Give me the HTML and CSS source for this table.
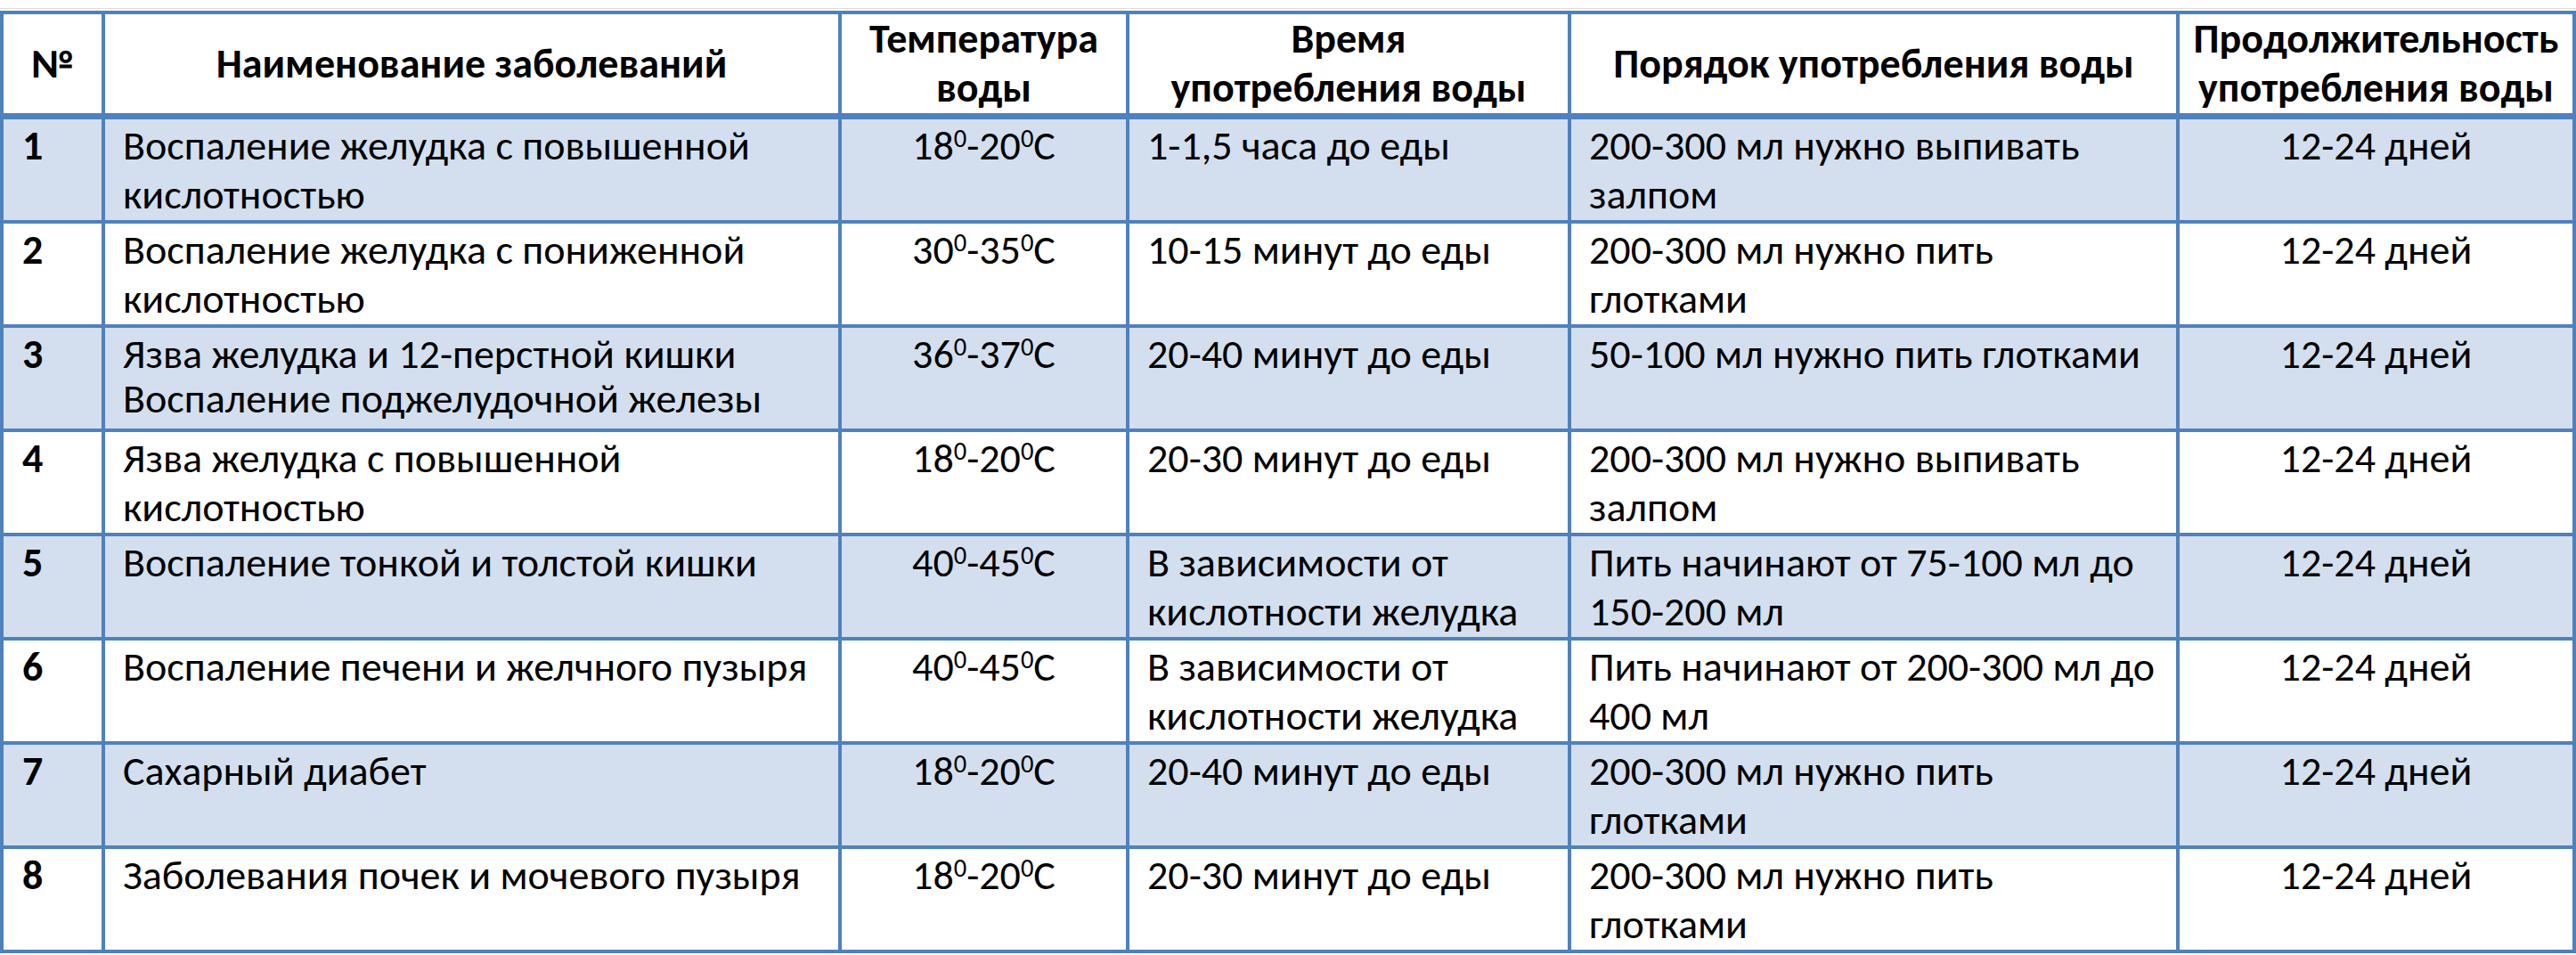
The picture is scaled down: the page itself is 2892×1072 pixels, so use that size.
FILE: index.html
```html
<!DOCTYPE html>
<html lang="ru">
<head>
<meta charset="utf-8">
<title>Таблица</title>
<link rel="stylesheet" href="styles.css">
</head>
<body>
<div class="page">
<table class="grid">
<colgroup>
<col class="c-num"><col class="c-name"><col class="c-temp"><col class="c-time"><col class="c-order"><col class="c-dur">
</colgroup>
<thead>
<tr class="head">
<th>№</th>
<th>Наименование заболеваний</th>
<th>Температура<br>воды</th>
<th>Время<br>употребления воды</th>
<th>Порядок употребления воды</th>
<th>Продолжительность<br>употребления воды</th>
</tr>
</thead>
<tbody>
<tr class="shade">
<td class="num">1</td>
<td>Воспаление желудка с повышенной<br>кислотностью</td>
<td class="ctr">18<sup>0</sup>-20<sup>0</sup>C</td>
<td>1-1,5 часа до еды</td>
<td>200-300 мл нужно выпивать<br>залпом</td>
<td class="ctr">12-24 дней</td>
</tr>
<tr>
<td class="num">2</td>
<td>Воспаление желудка с пониженной<br>кислотностью</td>
<td class="ctr">30<sup>0</sup>-35<sup>0</sup>C</td>
<td>10-15 минут до еды</td>
<td>200-300 мл нужно пить<br>глотками</td>
<td class="ctr">12-24 дней</td>
</tr>
<tr class="shade tight">
<td class="num">3</td>
<td>Язва желудка и 12-перстной кишки<br>Воспаление поджелудочной железы</td>
<td class="ctr">36<sup>0</sup>-37<sup>0</sup>C</td>
<td>20-40 минут до еды</td>
<td>50-100 мл нужно пить глотками</td>
<td class="ctr">12-24 дней</td>
</tr>
<tr>
<td class="num">4</td>
<td>Язва желудка с повышенной<br>кислотностью</td>
<td class="ctr">18<sup>0</sup>-20<sup>0</sup>C</td>
<td>20-30 минут до еды</td>
<td>200-300 мл нужно выпивать<br>залпом</td>
<td class="ctr">12-24 дней</td>
</tr>
<tr class="shade">
<td class="num">5</td>
<td>Воспаление тонкой и толстой кишки</td>
<td class="ctr">40<sup>0</sup>-45<sup>0</sup>C</td>
<td>В зависимости от<br>кислотности желудка</td>
<td>Пить начинают от 75-100 мл до<br>150-200 мл</td>
<td class="ctr">12-24 дней</td>
</tr>
<tr>
<td class="num">6</td>
<td>Воспаление печени и желчного пузыря</td>
<td class="ctr">40<sup>0</sup>-45<sup>0</sup>C</td>
<td>В зависимости от<br>кислотности желудка</td>
<td>Пить начинают от 200-300 мл до<br>400 мл</td>
<td class="ctr">12-24 дней</td>
</tr>
<tr class="shade">
<td class="num">7</td>
<td>Сахарный диабет</td>
<td class="ctr">18<sup>0</sup>-20<sup>0</sup>C</td>
<td>20-40 минут до еды</td>
<td>200-300 мл нужно пить<br>глотками</td>
<td class="ctr">12-24 дней</td>
</tr>
<tr>
<td class="num">8</td>
<td>Заболевания почек и мочевого пузыря</td>
<td class="ctr">18<sup>0</sup>-20<sup>0</sup>C</td>
<td>20-30 минут до еды</td>
<td>200-300 мл нужно пить<br>глотками</td>
<td class="ctr">12-24 дней</td>
</tr>
</tbody>
</table>
</div>
</body>
</html>
```

FILE: styles.css
```css
html, body {
  margin: 0;
  padding: 0;
  background: #ffffff;
}
.page {
  margin-top: 9px;
  border-top: 1px solid #dcdcdc;
  padding-top: 2px;
  width: 2892px;
}
.grid {
  border-collapse: collapse;
  table-layout: fixed;
  width: 2888px;
  font-family: "Carlito", "Roboto", "Liberation Sans", sans-serif;
  font-size: 46px;
  color: #000000;
}
.c-num { width: 114px; }
.c-name { width: 827px; }
.c-temp { width: 323px; }
.c-time { width: 496px; }
.c-order { width: 683px; }
.c-dur { width: 445px; }

.grid th, .grid td {
  border: 4px solid #4f81bd;
  white-space: nowrap;
}
.head th {
  padding: 0 6px 1px 6px;
  font-weight: bold;
  text-align: center;
  vertical-align: middle;
  line-height: 55px;
  border-bottom-width: 7px;
  background: #ffffff;
}
.grid td {
  padding: 2px 8px 1px 20px;
  vertical-align: top;
  text-align: left;
  line-height: 55px;
  background: #ffffff;
}
.grid tr.shade td {
  background: #d3dfee;
}
.grid tr.tight td {
  line-height: 50px;
  padding-top: 4px;
  padding-bottom: 9px;
}
.grid td.num {
  font-weight: bold;
  padding-left: 21px;
}
.grid td.ctr {
  text-align: center;
  padding-left: 8px;
  padding-right: 8px;
}
sup {
  font-size: 0.62em;
  line-height: 0;
  vertical-align: 0.5em;
}
```
